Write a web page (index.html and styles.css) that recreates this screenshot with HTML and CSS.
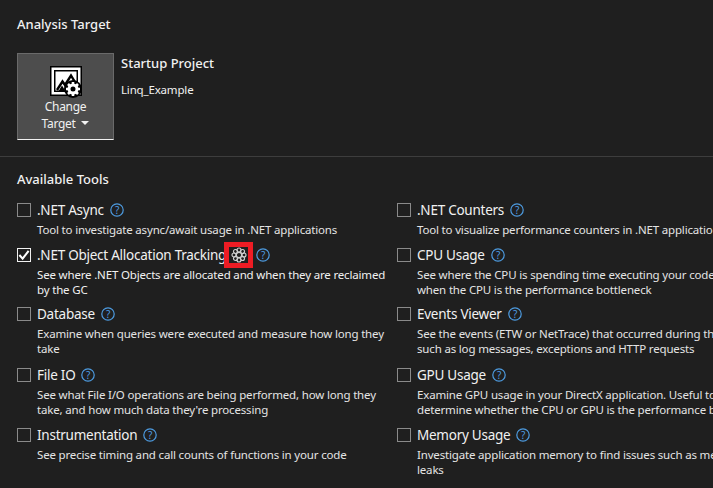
FILE: index.html
```html
<!DOCTYPE html>
<html lang="en">
<head>
<meta charset="utf-8">
<title>Analysis Target</title>
<link rel="stylesheet" href="styles.css">
</head>
<body>
<section class="target">
  <h2 class="heading">Analysis Target</h2>
  <div class="target-row">
    <button class="change">
      <svg class="target-icon" width="32" height="32" viewBox="0 0 32 32">
        <rect x="0" y="0" width="32" height="30" fill="#000"/>
        <rect x="1.500" y="1.500" width="29" height="27" fill="#fff"/>
        <rect x="4" y="4" width="24" height="22" fill="#000"/>
        <rect x="5.500" y="5.500" width="21" height="19" fill="#fff"/>
        <path d="M7 24 L12.500 15.500 L15 19 L21 9.500 L28 21" fill="none" stroke="#000" stroke-width="2.400"/>
        <path d="M8 26 L12 19.500 L16 26Z" fill="#000"/>
        <circle cx="23" cy="23" r="9" fill="#000"/>
        <g fill="none" stroke="#fff">
          <circle cx="23" cy="23" r="4" stroke-width="3"/>
          <path d="M23 16V19M23 27V30M16 23H19M27 23H30M18 18L20 20M26 26L28 28M28 18L26 20M20 26L18 28" stroke-width="2.600"/>
        </g>
      </svg>
      <span class="change-label">Change</span>
      <span class="change-label">Target <i class="caret"></i></span>
    </button>
    <div class="project">
      <div class="project-title">Startup Project</div>
      <div class="project-name">Linq_Example</div>
    </div>
  </div>
</section>
<hr class="rule">
<section class="tools">
  <h2 class="heading">Available Tools</h2>
  <div class="grid">
    <div class="tool">
      <div class="name"><span class="box"></span>.NET Async<svg class="help" viewBox="0 0 14 14"><use href="#q"/></svg></div>
      <p class="desc">Tool to investigate async/await usage in .NET applications</p>
    </div>
    <div class="tool">
      <div class="name"><span class="box"></span>.NET Counters<svg class="help" viewBox="0 0 14 14"><use href="#q"/></svg></div>
      <p class="desc">Tool to visualize performance counters in .NET applications</p>
    </div>
    <div class="tool">
      <div class="name"><span class="box checked"><svg width="12" height="12" viewBox="0 0 13 13"><path d="M1.500 6.500L5 10.500L11.500 2" fill="none" stroke="#fff" stroke-width="2.200"/></svg></span>.NET Object Allocation Tracking<span class="gear-frame"><svg width="16" height="16" viewBox="0 0 24 24" fill="none" stroke="#d0d0d0" stroke-width="1.700"><circle cx="12" cy="12" r="4"/><circle cx="12" cy="4.500" r="3"/><circle cx="12" cy="19.500" r="3"/><circle cx="4.500" cy="12" r="3"/><circle cx="19.500" cy="12" r="3"/><circle cx="6.700" cy="6.700" r="3"/><circle cx="17.300" cy="6.700" r="3"/><circle cx="6.700" cy="17.300" r="3"/><circle cx="17.300" cy="17.300" r="3"/></svg></span><svg class="help help-tight" viewBox="0 0 14 14"><use href="#q"/></svg></div>
      <p class="desc strong">See where .NET Objects are allocated and when they are reclaimed<br>by the GC</p>
    </div>
    <div class="tool">
      <div class="name"><span class="box"></span>CPU Usage<svg class="help" viewBox="0 0 14 14"><use href="#q"/></svg></div>
      <p class="desc">See where the CPU is spending time executing your code. Use it<br>when the CPU is the performance bottleneck</p>
    </div>
    <div class="tool">
      <div class="name"><span class="box"></span>Database<svg class="help" viewBox="0 0 14 14"><use href="#q"/></svg></div>
      <p class="desc">Examine when queries were executed and measure how long they<br>take</p>
    </div>
    <div class="tool">
      <div class="name"><span class="box"></span>Events Viewer<svg class="help" viewBox="0 0 14 14"><use href="#q"/></svg></div>
      <p class="desc">See the events (ETW or NetTrace) that occurred during the session<br>such as log messages, exceptions and HTTP requests</p>
    </div>
    <div class="tool">
      <div class="name"><span class="box"></span>File IO<svg class="help" viewBox="0 0 14 14"><use href="#q"/></svg></div>
      <p class="desc">See what File I/O operations are being performed, how long they<br>take, and how much data they're processing</p>
    </div>
    <div class="tool">
      <div class="name"><span class="box"></span>GPU Usage<svg class="help" viewBox="0 0 14 14"><use href="#q"/></svg></div>
      <p class="desc">Examine GPU usage in your DirectX application. Useful to<br>determine whether the CPU or GPU is the performance bottleneck</p>
    </div>
    <div class="tool">
      <div class="name"><span class="box"></span>Instrumentation<svg class="help" viewBox="0 0 14 14"><use href="#q"/></svg></div>
      <p class="desc">See precise timing and call counts of functions in your code</p>
    </div>
    <div class="tool">
      <div class="name"><span class="box"></span>Memory Usage<svg class="help" viewBox="0 0 14 14"><use href="#q"/></svg></div>
      <p class="desc">Investigate application memory to find issues such as memory<br>leaks</p>
    </div>
  </div>
</section>
<svg class="defs" width="0" height="0"><defs><g id="q"><circle cx="7" cy="7" r="6.200" fill="none" stroke="#4d9be0" stroke-width="1.200"/><text x="7" y="10.500" text-anchor="middle" font-size="10" font-family="Noto Sans, sans-serif" fill="#4d9be0">?</text></g></defs></svg>
</body>
</html>
```
FILE: styles.css
```css
html, body {
  margin: 0;
  height: 488px;
  overflow: hidden;
  background: #1f1f1f;
}
body {
  font-family: "Noto Sans", sans-serif;
  color: #f1f1f1;
  font-size: 12px;
}
.heading {
  margin: 0;
  font-size: 13px;
  line-height: 18px;
  font-weight: 500;
}
.target {
  padding: 15px 0 0 17px;
}
.target-row {
  display: flex;
  gap: 7px;
  margin-top: 20px;
}
.change {
  width: 97px;
  height: 87px;
  padding: 12px 0 0;
  box-sizing: border-box;
  display: flex;
  flex-direction: column;
  align-items: center;
  background: #4d4d4d;
  border: 1px solid #6a6a6a;
  border-bottom: 1px solid #f1f1f1;
  color: #f1f1f1;
  font: inherit;
}
.target-icon {
  flex: none;
}
.change-label {
  line-height: 17px;
  white-space: nowrap;
  letter-spacing: -0.3px;
}
.caret {
  display: inline-block;
  width: 0;
  height: 0;
  margin-left: 3px;
  vertical-align: 3px;
  border-left: 4px solid transparent;
  border-right: 4px solid transparent;
  border-top: 4px solid #f1f1f1;
}
.project-title {
  font-size: 13px;
  line-height: 18px;
  font-weight: 500;
  margin-top: 1px;
}
.project-name {
  margin-top: 9px;
  line-height: 17px;
  font-size: 11.500px;
  letter-spacing: -0.17px;
}
.rule {
  margin: 16px 0 0;
  border: 0;
  height: 1px;
  background: #3d3d3d;
}
.tools {
  padding: 13px 0 0 17px;
}
.grid {
  display: grid;
  grid-template-columns: 380px 380px;
  grid-template-rows: 45px 59px 61px 60px 50px;
  margin-top: 12px;
}
.tool {
  min-width: 0;
}
.name {
  display: flex;
  align-items: center;
  height: 20px;
  font-size: 13.500px;
  letter-spacing: -0.25px;
  white-space: nowrap;
}
.box {
  flex: none;
  width: 12px;
  height: 12px;
  margin-right: 6px;
  border: 1px solid #8a8a8a;
  display: flex;
}
.box.checked {
  border-color: #f1f1f1;
}
.help {
  width: 14px;
  height: 14px;
  margin-left: 6px;
}
.help-tight {
  margin-left: 3px;
}
.gear-frame {
  flex: none;
  display: flex;
  align-items: center;
  justify-content: center;
  border: 5px solid #ed1c24;
  width: 19px;
  height: 16px;
  margin-left: -2px;
  margin-top: -1px;
}
.desc {
  margin: 2px 0 0 20px;
  font-size: 11.500px;
  letter-spacing: -0.17px;
  line-height: 15px;
  white-space: nowrap;
  color: #e4e4e4;
}
.desc.strong {
  color: #f1f1f1;
}
.defs {
  position: absolute;
}
```
